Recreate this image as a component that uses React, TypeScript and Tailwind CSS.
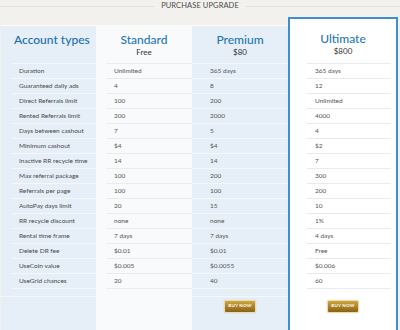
import React from "react";

const labels = [
  "Duration",
  "Guaranteed daily ads",
  "Direct Referrals limit",
  "Rented Referrals limit",
  "Days between cashout",
  "Minimum cashout",
  "Inactive RR recycle time",
  "Max referral package",
  "Referrals per page",
  "AutoPay days limit",
  "RR recycle discount",
  "Rental time frame",
  "Delete DR fee",
  "UseCoin value",
  "UseGrid chances",
];

const standard = ["Unlimited", "4", "100", "200", "7", "$4", "14", "100", "100", "20", "none", "7 days", "$0.01", "$0.005", "20"];
const premium = ["365 days", "8", "200", "2000", "5", "$4", "14", "200", "100", "15", "none", "7 days", "$0.01", "$0.0055", "40"];
const ultimate = ["365 days", "12", "Unlimited", "4000", "4", "$2", "7", "300", "200", "10", "1%", "4 days", "Free", "$0.006", "60"];

function Rows({ items, wrap, line, text }: { items: string[]; wrap: string; line: string; text: string }) {
  return (
    <div className={wrap}>
      <div className={`border-t ${line}`}>
        {items.map((v, i) => (
          <div key={i} className={`h-[15px] border-b ${line} flex items-center ${text}`}>
            {v}
          </div>
        ))}
      </div>
    </div>
  );
}

function BuyNow() {
  return (
    <div className="flex justify-center pt-[3px]">
      <div className="w-[32px] h-[13px] rounded-[2px] border border-[#e9dcae] bg-linear-to-b from-[#cfa63c] to-[#8a6213] shadow-[0_0_1px_rgba(0,0,0,0.3)] flex items-center justify-center text-white text-[4.5px] font-bold tracking-[0.2px] leading-none">
        BUY NOW
      </div>
    </div>
  );
}

export default function App() {
  return (
    <div className="w-[400px] h-[330px] bg-[#f2f1ee] overflow-hidden font-['Lato',sans-serif]">
      <div className="h-[17px] pt-[1px]">
        <div className="h-[10px] flex items-center">
          <div className="flex-1 h-px bg-[#e2e0dc]" />
          <div className="px-[7px] text-[7.5px] leading-[10px] text-[#4a4a4a] tracking-[0.1px]">PURCHASE UPGRADE</div>
          <div className="flex-1 h-px bg-[#e2e0dc]" />
        </div>
      </div>
      <div className="flex h-[313px] items-start">
        {/* Account types */}
        <div className="w-[95px] ml-[1px] mt-[8px] h-[305px] bg-[#e6eff7] border-t border-[#fafbfc]">
          <div className="h-[37px] pt-[7px] pl-[13px] text-[12px] leading-[14px] font-medium text-[#1b6ea9]">Account types</div>
          <Rows items={labels} wrap="ml-[11px]" line="border-[#f4f8fb]" text="pl-[7px] text-[6.5px] text-[#484848]" />
          <div className="mt-[7px] h-px bg-[#f4f8fb]" />
        </div>
        {/* Standard */}
        <div className="w-[96px] mt-[8px] h-[305px] bg-[#f8fafc] border-t border-[#fafbfc]">
          <div className="h-[37px] pt-[7px] text-center">
            <div className="text-[12px] leading-[14px] font-medium text-[#1f77b6]">Standard</div>
            <div className="text-[8px] leading-[10px] text-[#333]">Free</div>
          </div>
          <Rows items={standard} wrap="ml-[11px]" line="border-[#e9ecef]" text="pl-[7px] text-[6.5px] text-[#555]" />
        </div>
        {/* Premium */}
        <div className="w-[96px] mt-[8px] h-[305px] bg-[#e6eff7] border-t border-[#fafbfc]">
          <div className="h-[37px] pt-[7px] text-center">
            <div className="text-[12px] leading-[14px] font-medium text-[#1f77b6]">Premium</div>
            <div className="text-[8px] leading-[10px] text-[#333]">$80</div>
          </div>
          <Rows items={premium} wrap="" line="border-[#f4f8fb]" text="pl-[18px] text-[6.5px] text-[#555]" />
          <div className="mt-[7px] h-px bg-[#f4f8fb]" />
          <BuyNow />
        </div>
        {/* Ultimate */}
        <div className="w-[110px] h-[320px] bg-white border-2 border-b-0 border-[#3d8fcf]">
          <div className="h-[44px] pt-[13px] text-center">
            <div className="text-[12px] leading-[14px] font-medium text-[#1f77b6]">Ultimate</div>
            <div className="text-[8px] leading-[10px] text-[#333]">$800</div>
          </div>
          <Rows items={ultimate} wrap="ml-[17px] mr-[5px]" line="border-[#e9ecef]" text="pl-[8px] text-[6.5px] text-[#555]" />
          <div className="mt-[7px] h-px" />
          <BuyNow />
        </div>
      </div>
    </div>
  );
}
